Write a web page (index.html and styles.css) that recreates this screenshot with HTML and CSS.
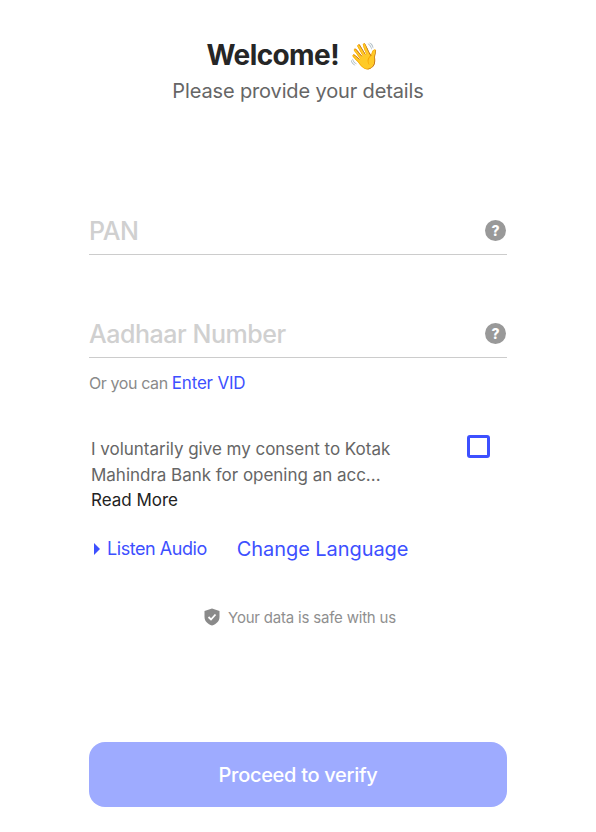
FILE: index.html
```html
<!DOCTYPE html>
<html lang="en">
<head>
    <meta charset="UTF-8">
    <meta name="viewport" content="width=device-width, initial-scale=1.0">
    <title>Welcome</title>
    <link rel="stylesheet" href="styles.css">
</head>
<body>
    <div class="page">
        <div class="header">
            <h1>Welcome! <span class="wave">👋</span></h1>
            <p class="subtitle">Please provide your details</p>
        </div>

        <div class="field field-pan">
            <span class="field-label">PAN</span>
            <span class="help">?</span>
        </div>

        <div class="field field-aadhaar">
            <span class="field-label">Aadhaar Number</span>
            <span class="help">?</span>
        </div>
        <p class="vid">Or you can <a href="#">Enter VID</a></p>

        <div class="consent">
            <div class="consent-text">
                <p>I voluntarily give my consent to Kotak Mahindra Bank for opening an acc...</p>
                <a class="read-more" href="#">Read More</a>
            </div>
            <span class="checkbox"></span>
        </div>

        <div class="links">
            <a class="audio" href="#"><span class="triangle"></span>Listen Audio</a>
            <a class="language" href="#">Change Language</a>
        </div>

        <div class="safe">
            <svg viewBox="0 0 16 18" width="16" height="18">
                <path d="M8 0.5L15.5 3v6c0 4.2-3.2 7.2-7.5 8.5C3.700 16.200 0.500 13.200 0.500 9V3z" fill="#8a8a8a"/>
                <path d="M4.500 9l2.500 2.500 4.500-5" stroke="#fff" stroke-width="1.800" fill="none"/>
            </svg>
            <span>Your data is safe with us</span>
        </div>

        <button class="proceed">Proceed to verify</button>
    </div>
</body>
</html>
```

FILE: styles.css
```css
body {
    font-family: Inter, "Noto Sans", sans-serif;
    background-color: #fff;
    margin: 0;
}

a {
    text-decoration: none;
}

.page {
    width: 418px;
    height: 832px;
    margin: 0 auto;
    padding-top: 39px;
    box-sizing: border-box;
}

.header {
    text-align: center;
}

h1 {
    height: 32px;
    padding-right: 10px;
    font-size: 28px;
    line-height: 32px;
    font-weight: 700;
    color: #262626;
    margin: 0;
    letter-spacing: -0.6px;
}

.wave {
    font-size: 26px;
    line-height: 1;
    margin-left: 3px;
}

.subtitle {
    font-size: 20px;
    line-height: 28px;
    color: #666;
    margin: 6px 0 0;
    letter-spacing: -0.14px;
}

.field {
    display: flex;
    justify-content: space-between;
    align-items: center;
    height: 42px;
    padding-bottom: 2px;
    border-bottom: 1px solid #ccc;
}

.field-pan {
    margin-top: 105px;
}

.field-aadhaar {
    margin-top: 58px;
}

.field-label {
    font-size: 25px;
    font-weight: 500;
    color: #d0d0d0;
    letter-spacing: -0.45px;
}

.help {
    width: 21px;
    height: 21px;
    margin: 0 1px 1px 0;
    border-radius: 50%;
    background-color: #999;
    color: #fff;
    font-size: 14px;
    font-weight: 800;
    line-height: 21px;
    text-align: center;
}

.vid {
    font-size: 16px;
    line-height: 22px;
    color: #8a8a8a;
    margin: 14px 0 0;
    letter-spacing: -0.4px;
}

.vid a {
    font-size: 17px;
    letter-spacing: -0.2px;
    color: #3d50ff;
}

.consent {
    display: flex;
    justify-content: space-between;
    margin-top: 41px;
    padding: 0 17px 0 2px;
}

.consent-text {
    width: 325px;
    padding-top: 2px;
    font-size: 17px;
    line-height: 25.5px;
    letter-spacing: -0.02px;
}

.consent-text p {
    color: #666;
    margin: 0;
}

.read-more {
    color: #222;
}

.checkbox {
    width: 17px;
    height: 17px;
    border: 3px solid #3d50ff;
    border-radius: 3px;
}

.links {
    display: flex;
    align-items: center;
    gap: 30px;
    margin-top: 23px;
    padding-left: 5px;
}

.links a {
    color: #3d50ff;
}

.audio {
    font-size: 18px;
    letter-spacing: -0.45px;
}

.triangle {
    display: inline-block;
    border-left: 6px solid #3d50ff;
    border-top: 6px solid transparent;
    border-bottom: 6px solid transparent;
    margin-right: 7px;
}

.language {
    font-size: 20px;
    letter-spacing: -0.07px;
}

.safe {
    display: flex;
    justify-content: center;
    align-items: center;
    gap: 8px;
    margin-top: 47px;
    padding-left: 4px;
    font-size: 15px;
    color: #8f8f8f;
    letter-spacing: -0.2px;
}

.proceed {
    display: block;
    width: 100%;
    height: 65px;
    margin-top: 115px;
    padding-top: 3px;
    border: none;
    border-radius: 16px;
    background-color: #9eabff;
    color: #fff;
    font-family: inherit;
    font-size: 20px;
    font-weight: 500;
    letter-spacing: -0.3px;
    cursor: pointer;
}
```
